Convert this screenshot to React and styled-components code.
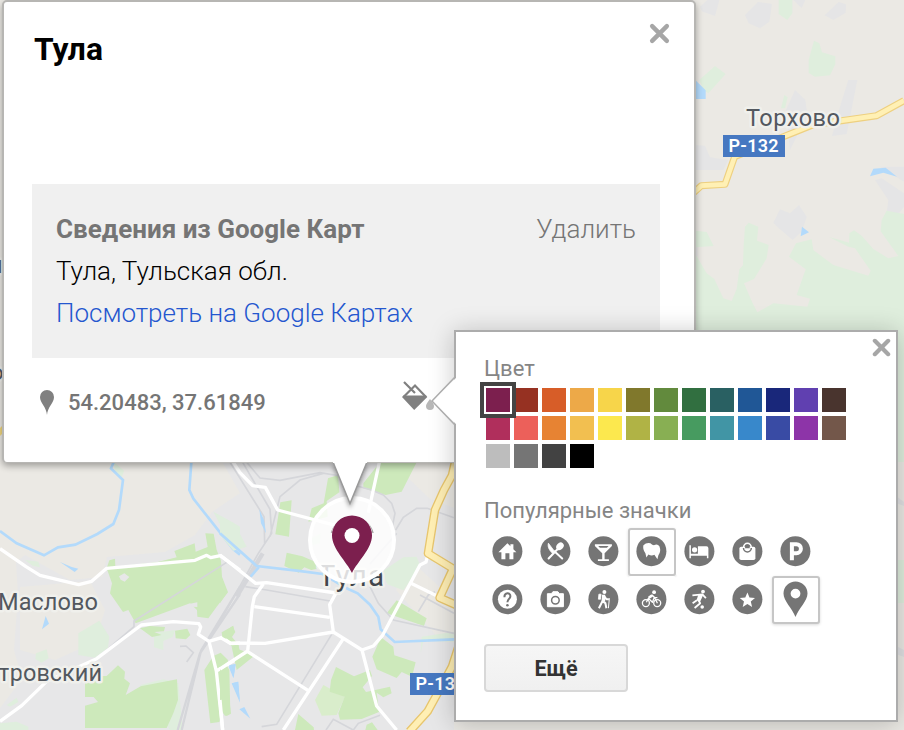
import React from "react";
import styled, { createGlobalStyle } from "styled-components";

const GlobalStyle = createGlobalStyle`
  *, *::before, *::after { box-sizing: border-box; }
  html, body { margin: 0; padding: 0; overflow: hidden; }
  body { font-family: Roboto, "Liberation Sans", sans-serif; -webkit-font-smoothing: antialiased; }
  button { font: inherit; cursor: pointer; }
`;

const Page = styled.main`
  position: relative;
  width: 904px;
  height: 730px;
  overflow: hidden;
  background: #ebe9e4;
`;

const MapCanvas = styled.svg`
  display: block;
  width: 904px;
  height: 730px;
  font-family: Roboto, sans-serif;
`;

const InfoWindow = styled.section`
  position: absolute;
  left: 2px;
  top: 0;
  width: 694px;
  height: 463px;
  padding: 26px 34px 0 28px;
  display: flex;
  flex-direction: column;
  background: #fff;
  border: 2px solid #b7b6b3;
  border-bottom-width: 1px;
  border-radius: 5px;
  box-shadow: 0 3px 7px rgba(0, 0, 0, 0.32);
`;

const Header = styled.header`
  display: flex;
  justify-content: space-between;
  height: 156px;
`;

const Title = styled.h1`
  margin: 0 0 0 2px;
  font-size: 31.8px;
  font-weight: 700;
  line-height: 43px;
  color: #000;
`;

const CloseButton = styled.button`
  display: flex;
  align-items: center;
  justify-content: center;
  width: ${(p) => p.$size}px;
  height: ${(p) => p.$size}px;
  margin: ${(p) => p.$margin || 0};
  padding: 0;
  border: 0;
  background: none;
  color: #a6a6a6;
`;

const Details = styled.div`
  height: 174px;
  padding: 24px;
  background: #f0f0f0;
`;

const DetailsRow = styled.div`
  display: flex;
  justify-content: space-between;
  height: 42px;
  font-size: 26px;
  font-weight: 300;
  line-height: 42px;
  white-space: nowrap;
  color: ${(p) => p.$color || "#000"};
`;

const Strong = styled.span`
  font-weight: 700;
  font-size: 26px;
`;

const Link = styled.a`
  color: inherit;
`;

const Footer = styled.div`
  display: flex;
  align-items: center;
  height: 88px;
  padding-left: 8px;
  color: #808080;
`;

const Coordinates = styled.span`
  margin-left: 14px;
  font-size: 22px;
  font-weight: 500;
  color: #757575;
`;

const Paint = styled.svg`
  width: 36px;
  height: 32px;
  margin: 0 223px 12px auto;
`;

const Tail = styled.svg`
  position: absolute;
  left: 322px;
  top: 460px;
  width: 60px;
  height: 54px;
  overflow: visible;
`;

const Picker = styled.section`
  position: absolute;
  left: 454px;
  top: 330px;
  width: 444px;
  height: 392px;
  padding: 24px 28px;
  display: flex;
  flex-direction: column;
  background: #fff;
  border: 2px solid #acacac;
  box-shadow: 0 2px 24px rgba(0, 0, 0, 0.22);
`;

const PickerClose = styled.div`
  position: absolute;
  right: 4px;
  top: 4px;
`;

const PickerArrow = styled.svg`
  position: absolute;
  left: -26px;
  top: 44px;
  width: 27px;
  height: 50px;
`;

const Label = styled.h2`
  margin: 0;
  height: 26px;
  font-size: 22px;
  font-weight: 400;
  line-height: 26px;
  color: #858585;
`;

const Swatches = styled.div`
  display: grid;
  grid-template-columns: repeat(13, 24px);
  grid-auto-rows: 24px;
  gap: 4px;
  margin: 6px 0 30px 2px;
`;

const Swatch = styled.button`
  padding: 0;
  border: 0;
  background: ${(p) => p.$color};
  z-index: ${(p) => (p.$selected ? 1 : 0)};
  box-shadow: ${(p) => (p.$selected ? "0 0 0 2px #fff, 0 0 0 6px #444" : "none")};
`;

const IconGrid = styled.div`
  display: grid;
  grid-template-columns: repeat(7, 48px);
  grid-auto-rows: 48px;
  margin-top: 4px;
`;

const IconCell = styled.button`
  display: flex;
  padding: 0;
  border: 2px solid ${(p) => (p.$selected ? "#c6c6c6" : "transparent")};
  border-radius: 3px;
  background: #fff;
  box-shadow: ${(p) => (p.$selected ? "0 1px 3px rgba(0,0,0,0.15)" : "none")};
`;

const Glyph = styled.svg`
  width: 44px;
  height: 44px;
  flex: none;
`;

const MoreButton = styled.button`
  width: 144px;
  height: 48px;
  margin-top: 20px;
  padding: 0;
  border: 2px solid #d8d8d8;
  border-radius: 4px;
  background: linear-gradient(#f6f6f6, #f0f0f0);
  font-size: 21.6px;
  font-weight: 700;
  color: #333;
`;

function Cross({ size, stroke }) {
  return (
    <svg width={size} height={size} viewBox="0 0 20 20">
      <path d="M3 3 17 17M17 3 3 17" stroke="currentColor" strokeWidth={stroke} strokeLinecap="round" />
    </svg>
  );
}

function MapView() {
  return (
    <MapCanvas viewBox="0 0 904 730">
      <rect width="904" height="730" fill="#ebe9e4" />

      {/* eastern countryside */}
      <g transform="translate(680 0) scale(.33333)">
        <g fill="#e5e5e6">
          <path d="M60 20 82 0H118L105 48 65 34ZM195 45 234 6 276 12 268 65 240 85 206 70ZM434 46 476 6 498 13 497 38 460 60ZM340 0H376L365 24ZM505 240H532L500 402 456 408 480 320ZM345 270 376 300 382 345 330 450 318 330ZM42 435 75 437 90 472 145 480 130 510H42ZM280 668 300 628 330 640 357 615 380 650 365 695 338 720 293 682ZM585 540 605 535 672 580V620L655 642 620 640 625 600ZM600 500 672 500V545ZM42 700H52V770H42Z" />
        </g>
        <g fill="#dfeedd">
          <path d="M296 0H337V40L322 60 296 42ZM386 180 402 122 418 130 426 157 466 169V193L450 226 405 230 386 219ZM58 240 105 198 137 222 85 280 70 270ZM303 325 313 285 323 292 315 325ZM48 692 80 696 101 738 48 742ZM195 680 206 668 235 680 231 722 266 735 260 775 222 837 192 850H187L191 735ZM192 850 218 910 232 937 280 910 382 920 390 896 350 885 377 808 327 770 348 730 395 718 400 750 460 795 565 827 572 812 525 745 505 740 447 711 480 720 507 728 508 700 522 691 545 707 580 747 625 775 655 768 602 694 605 660 620 632 672 642V1020H45V760L80 820 103 837 130 895 155 903 170 867 178 808 212 771 222 800Z" />
        </g>
        <path d="M42 236 77 271V297H42ZM570 529 580 506 617 503 651 530 610 518ZM366 680 387 697 362 709Z" fill="#b3dafb" />
        <g fill="none" strokeLinejoin="round">
          <path d="M30 588 64 557 135 553 164 470 310 410 400 374 590 347 672 302" stroke="#eed080" strokeWidth="21" />
          <path d="M30 588 64 557 135 553 164 470 310 410 400 374 590 347 672 302" stroke="#fff0b4" strokeWidth="14" />
        </g>
      </g>
      <path d="M896 330H904V462H896ZM896 560H904V603H896Z" fill="#dfeedd" />
      <path d="M896 496 904 502V506L896 503ZM896 646 904 650V657L896 654Z" fill="#e0e0e2" />

      {/* city area */}
      <path d="M210 440H454V730H0V708L22 679 14 650 18 594 16 562 25 555 70 580 102 577 107 557 165 552 195 535 212 512 240 493Z" fill="#e7e7e8" />
      <path d="M20 587 90 581 105 610 95 642 55 660 20 650ZM380 455H454V508L430 499 405 475ZM396 590 440 640 454 632V600L410 560Z" fill="#ebe9e4" />
      <g transform="translate(0 440) scale(.33333)">
        <g fill="#dfeedd">
          <path d="M640 215 695 245 720 260V330L680 290ZM342 67 372 92 366 110 345 101ZM235 580 298 542 328 590 324 623 285 653 235 645ZM108 640 140 628 146 655 125 668 106 657ZM462 580 525 570 519 590 490 603V630L462 622ZM75 360 115 365 120 382 98 377ZM20 795 50 773 55 786 30 800ZM0 850 50 845 85 860V870H0ZM420 735 490 718 535 730 548 870H510Z" />
        </g>
        <g fill="#cde9bb">
          <path d="M320 385 328 361 345 356 346 380 470 367 530 352 523 333 584 310 587 335 623 321 616 280 641 281 650 330 663 362 666 410 684 457 650 500 625 535 592 530 591 510 570 490 407 550 385 510 369 516 330 460 336 430ZM420 565 450 558 495 561 492 574 463 576 485 585 456 591ZM525 572 562 566 571 585 558 598 527 595ZM668 580 698 558 706 576 696 591 716 615 720 640 672 600ZM613 690 640 648 662 638 684 660 679 695 693 821 680 828 665 815 658 846 631 850Z" />
          <path d="M255 708 320 708 354 676 375 695 373 716 390 730 377 765 422 739 531 718 534 780 520 820 500 864H255V797L294 786 281 771H255Z" />
        </g>
        <path d="M357 409 373 400 388 411 374 425 362 419ZM570 491 592 487V501L575 500Z" fill="#e7e7e8" />
        <g fill="none" stroke="#d5d6da">
          <path d="M680 367 402 543V560L290 656M540 619 558 618 580 638 560 666" strokeWidth="5" />
          <path d="M720 462 600 640 533 870M545 870 603 632 720 440" strokeWidth="7" />
        </g>
        <g fill="none" stroke="#b3dafb">
          <path d="M0 273 50 310 132 346 174 322 226 314 292 282 340 252 357 210 369 120 333 85 341 67M574 67 568 150 580 176 700 328 720 344" strokeWidth="8" />
        </g>
        <path d="M180 366 215 381 235 386 224 396ZM137 528 147 551 126 568ZM687 675 707 672 701 714ZM695 730 715 725 720 788Z" fill="#b3dafb" />
        <g fill="none" stroke="#fff" strokeWidth="10" strokeLinejoin="round">
          <path d="M0 326 78 380 120 406 236 434 275 424 320 385 585 361 620 346 632 353 661 347 720 390M0 844 65 797 140 724 290 656 424 555 520 545 597 551 602 561 595 583 627 604 667 592 692 611 720 609M627 604 649 693 668 870M649 693 720 651" />
        </g>
      </g>
      <g transform="translate(220 440) scale(.33333)">
        <g fill="#dfeedd">
          <path d="M0 235 45 253 80 320 40 332 0 285ZM485 395 550 352 590 350 602 380 550 451 502 433ZM605 590 702 575V605L610 602 602 640ZM264 300 302 280 300 310 270 318Z" />
          <path d="M285 780 310 735 375 770 350 825 305 827Z" fill="#d9edcb" />
        </g>
        <g fill="#cde9bb">
          <path d="M181 187 215 181 207 290 166 283ZM324 115 354 105 358 157 320 183 323 230 265 245 275 205 311 190ZM430 130 480 67H590L545 155 497 165 430 145ZM200 338 247 349 320 380 274 390 253 382 236 398 193 378ZM530 481 620 535 612 558 500 520ZM457 650 483 592 520 620 523 646 587 667 576 710 545 696 530 714 470 688ZM333 720 348 681 402 709 450 690 456 708 428 742 438 756 510 740 515 760 490 772 470 758 477 816 425 837 360 839 355 820 374 770 329 755ZM235 822 281 862 282 870H225ZM440 854 456 847 473 870H436ZM629 359 702 372V394ZM0 400 22 457 0 490ZM5 577 40 557 43 575 30 591 8 600ZM35 620 105 646 50 690ZM0 640 28 690 31 820 15 828 0 800Z" />
        </g>
        <g fill="none" stroke="#d5d6da" strokeWidth="5">
          <path d="M30 67 132 230 134 310M68 67 150 208 155 280 115 340 0 545M80 67 120 114 180 121 300 98 360 108 400 135 455 150 490 165 515 190 525 220 515 270M150 290 180 170 240 120 310 100M76 440 140 450 330 483M335 583 170 853 125 860M450 440 475 490 520 540 702 580M527 270 550 232 590 205 622 205 702 233M450 372 530 280M595 515 625 465 645 455M600 465 702 520M318 870 340 838 400 870 415 850 480 826" />
          <path d="M128 340 50 470" strokeWidth="13" />
        </g>
        <path d="M0 280 110 378 230 392 308 402 380 445 413 460 450 494 475 530 482 568 524 606 702 598M116 382 92 410" fill="none" stroke="#b3dafb" strokeWidth="8" />
        <path d="M118 208 132 240 138 280 123 250ZM26 680 47 672 40 714ZM36 730 54 725 59 780ZM58 808 73 801 91 836Z" fill="#b3dafb" />
        <g fill="none" stroke="#fff" strokeWidth="10" strokeLinejoin="round">
          <path d="M40 67 60 98 98 137 136 142 173 210 360 260M478 67 445 218M0 345 107 430 140 428 348 459 359 459 370 448M130 432 103 470 97 500 83 633 0 687M103 500 329 532M0 592 30 609 135 610 340 576M348 459 329 494 340 576 426 630 460 618 487 587 600 375 618 366 623 347M426 630 470 798 530 870M370 596 190 870M83 635 265 752M573 430 650 467M0 780 8 870" />
        </g>
        <path d="M705 67 696 106 672 150 645 210 624 340 699 386 659 473 720 500M725 590 696 680 650 765 623 814 568 875" fill="none" stroke="#e8c66e" strokeWidth="26" strokeLinejoin="round" />
        <path d="M705 67 696 106 672 150 645 210 624 340 699 386 659 473 720 500M725 590 696 680 650 765 623 814 568 875" fill="none" stroke="#ffefb4" strokeWidth="18" strokeLinejoin="round" />
      </g>

      <g fill="#53585f" stroke="#f0f0ec" strokeWidth="5" strokeLinejoin="round" paintOrder="stroke" fontSize="23.6">
        <text x="746" y="126" textLength="94">Торхово</text>
        <text x="-2" y="609.5" textLength="100">Маслово</text>
        <text x="-1.5" y="681" textLength="103.5">тровский</text>
        <text x="318" y="586" fontSize="29" fill="#42464b" textLength="66">Тула</text>
        <text x="-15" y="273" fontSize="23">ы</text>
        <text x="-9" y="380" fontSize="22">о</text>
      </g>
      <path d="M0 436V428L4 424V432Z" fill="#efd67e" />
      <g fill="#4678c1">
        <rect x="723" y="135" width="62" height="22" />
        <rect x="410" y="673" width="62" height="22" />
      </g>
      <g fill="#fff" fontSize="18" fontWeight="600">
        <text x="728.5" y="152.3" textLength="50">Р-132</text>
        <text x="415.5" y="690.3" textLength="50">Р-132</text>
      </g>

      <circle cx="352" cy="540" r="42" fill="#fff" fillOpacity=".82" stroke="#fff" strokeWidth="4" />
      <path d="M331.5 533A21.5 21.5 0 0 1 373 533" fill="none" stroke="#9b9b9b" strokeWidth="1.5" />
      <path d="M352 573C347 562 332 549 332 535.5A20 20 0 0 1 372 535.5C372 549 357 562 352 573Z" fill="#7c1f4e" stroke="#fff" strokeWidth="1" paintOrder="stroke" />
      <circle cx="352" cy="535.5" r="7.5" fill="#fff" />
    </MapCanvas>
  );
}

const colors = [
  "#7c1f4e", "#963122", "#d75d28", "#eda948", "#f7d54a", "#80782c", "#628a3d", "#316f40", "#296062", "#205796", "#19277a", "#6040b0", "#49342e",
  "#b02f5c", "#ec605a", "#e78333", "#f2bf50", "#fce84e", "#b0b345", "#88af53", "#479b60", "#4195a5", "#3888cb", "#394ba4", "#8d34a8", "#73574a",
  "#bdbdbd", "#757575", "#424242", "#000000",
];

/* Artwork is centred on the origin; the badge is 30 units wide. */
const icons = {
  home: <path d="M-9 1 0-8 3-5V-7H6V-2L9 1H6V8H2V2H-2V8H-6V1Z" fill="#fff" />,
  restaurant: (
    <g fill="#fff" stroke="#fff">
      <path d="M-7-8-1 0-3 2C-6-1-8-4-7-8Z" strokeWidth=".8" />
      <ellipse cx="4.6" cy="-4.9" rx="3.3" ry="4.2" transform="rotate(42 4.6 -4.9)" stroke="none" />
      <path d="M-6.8 7.3 3-3M-1 0 6.8 7.3" strokeWidth="2" strokeLinecap="round" fill="none" />
    </g>
  ),
  bar: <path fillRule="evenodd" d="M-8.5-7H8.5V-5.2L1.2 2V8H5.5V9.8H-5.5V8H-1.2V2L-8.5-5.2ZM-5.2-5.2-3.5-3.5H3.5L5.2-5.2Z" fill="#fff" />,
  theatre: (
    <path
      d="M-8-6Q-5-9-1-8 1-6 2.5-6 6-8 8-5 10 0 7 4L6 8 3 3.5Q0 5-3 3.2L-5 6.4-6 2Q-9-2-8-6Z"
      fill="#fff"
    />
  ),
  hotel: (
    <g fill="#fff">
      <path d="M-10-6H-8.5V2.5H-1.5V-5H7Q9-5 9-3V7H7.5V4.5H-8.5V7H-10Z" />
      <circle cx="-4.8" cy="-1.4" r="2.6" />
    </g>
  ),
  shopping: (
    <g>
      <rect x="-8" y="-4.5" width="16" height="13.3" rx="1.8" fill="#fff" />
      <path d="M-3.8-4A3.8 3.8 0 0 1 3.8-4" fill="none" stroke="#fff" strokeWidth="1.6" />
      <path d="M-2.3-4.6A2.3 2.3 0 0 1 2.3-4.6V-3H-2.3Z" fill="#757575" />
      <path d="M-3.9-3.2A3.9 3.9 0 0 0 3.9-3.2" fill="none" stroke="#757575" strokeWidth="1.5" />
    </g>
  ),
  parking: <path d="M-3.5 9V-7H1A4.3 4.3 0 0 1 1 2H-3" fill="none" stroke="#fff" strokeWidth="4" />,
  help: (
    <g>
      <circle r="9.5" fill="#fff" />
      <path d="M-3-2C-3-7 3-7 3-3 3-.5 0 0 0 3" stroke="#757575" strokeWidth="2" fill="none" />
      <circle cy="6" r="1.3" fill="#757575" />
    </g>
  ),
  camera: (
    <g>
      <path d="M-8-5.5H-4L-2.5-7.5H2.5L4-5.5H8V7.5H-8Z" fill="#fff" stroke="#fff" strokeLinejoin="round" />
      <circle cy="1" r="3.8" fill="none" stroke="#757575" strokeWidth="1.5" />
    </g>
  ),
  hiking: (
    <g stroke="#fff" fill="none" strokeWidth="2" strokeLinejoin="round">
      <circle cx="1" cy="-7.3" r="2" fill="#fff" stroke="none" />
      <path d="M0-4-1 2 2 4 3 9M-1 2-2.5 5-4.5 9M1-3 3 0H5.5" />
      <path d="M-4.5-5-5 0H-2.8L-2.3-5Z" fill="#fff" strokeWidth=".8" />
      <path d="M6-1 5 9" strokeWidth="1" />
      <path d="M.2-4.5V2.5" strokeWidth="3.2" />
    </g>
  ),
  bike: (
    <g stroke="#fff" fill="none" strokeWidth="1.3" strokeLinejoin="round">
      <circle cx="-5.5" cy="3.9" r="3.5" />
      <circle cx="5.8" cy="3.9" r="3.5" />
      <path d="M-5 3-3-1 1 3 3-2 6 4M-3-1 1-4 3-1.5H6" />
      <path d="m-2.6-1.4 3.4-2.4" strokeWidth="2.6" />
      <circle cx="2.7" cy="-7" r="1.9" fill="#fff" stroke="none" />
    </g>
  ),
  football: (
    <g fill="none" stroke="#fff" strokeWidth="1.8" strokeLinejoin="round">
      <circle cx="3.6" cy="-7.6" r="1.9" fill="#fff" stroke="none" />
      <circle cx="2.8" cy="7.8" r="1.8" fill="#fff" stroke="none" />
      <path d="M-7-3.8 3-4.8 6.5-1M-2.5 1-6.8 4M-1 1 .8 4-4.8 8.8" />
      <path d="M-1-4.8H4L.8 2.2-3 1.2Z" fill="#fff" stroke="none" />
    </g>
  ),
  star: <path d="m0-7.5 2.1 5.1 5.5.4-4.2 3.6 1.3 5.4L0 4.1-4.7 7l1.3-5.4L-7.6-2l5.5-.4Z" fill="#fff" transform="translate(0 .8)" />,
};

const iconNames = [
  "home", "restaurant", "bar", "theatre", "hotel", "shopping", "parking",
  "help", "camera", "hiking", "bike", "football", "star", "pin",
];

function PoiIcon({ name }) {
  if (name === "pin") {
    return (
      <Glyph viewBox="0 0 44 44">
        <path fillRule="evenodd" d="M21.5 39C18 30 9.5 23 9.5 15.5A12 12 0 0 1 33.5 15.5C33.5 23 25 30 21.5 39ZM21.5 10.7A4.9 4.9 0 1 0 21.5 20.5A4.9 4.9 0 1 0 21.5 10.7Z" fill="#757575" />
      </Glyph>
    );
  }
  return (
    <Glyph viewBox="0 0 44 44">
      <g transform="translate(21.4 21.2)">
        <circle r="15" fill="#757575" />
        {icons[name]}
      </g>
    </Glyph>
  );
}

export default function App() {
  return (
    <>
      <GlobalStyle />
      <Page>
        <MapView />
        <InfoWindow>
          <Header>
            <Title>Тула</Title>
            <CloseButton $size={30} $margin="-10px -14px 0 0" aria-label="Закрыть">
              <Cross size={21} stroke={4.2} />
            </CloseButton>
          </Header>
          <Details>
            <DetailsRow $color="#757575">
              <Strong>Сведения из Google Карт</Strong>
              <Link>Удалить</Link>
            </DetailsRow>
            <DetailsRow>Тула, Тульская обл.</DetailsRow>
            <DetailsRow $color="#2457cf">
              <Link>Посмотреть на Google Картах</Link>
            </DetailsRow>
          </Details>
          <Footer>
            <svg width="14" height="25" viewBox="0 0 14 25">
              <path d="M7 25C6.5 17 0 13 0 7A7 7 0 0 1 14 7C14 13 7.5 17 7 25Z" fill="currentColor" />
            </svg>
            <Coordinates>54.20483, 37.61849</Coordinates>
            <Paint viewBox="0 0 36 32">
              <path d="M3 2 14 13M2.5 17 14 5.5 25 17" fill="none" stroke="#808080" strokeWidth="2.2" />
              <path d="M1 17 2.5 15.5H25L26.3 17 13.2 30Z" fill="#808080" />
              <path d="M29 19Q25 24 25 26A4 4 0 0 0 33 26Q33 24 29 19Z" fill="#b8b8b8" />
            </Paint>
          </Footer>
        </InfoWindow>
        <Tail viewBox="0 0 60 54">
          <path d="M11 2 28 43.5 45 2" fill="#fff" stroke="#999" strokeWidth="1.5" filter="drop-shadow(0 3px 2px rgba(0,0,0,.35))" />
          <path d="M10 0H46L45 3H11Z" fill="#fff" />
        </Tail>
        <Picker>
          <PickerArrow viewBox="0 0 27 50">
            <path d="M27 1 2 25 27 49Z" fill="#fff" />
            <path d="M25 1 2 25 25 49" fill="none" stroke="#acacac" strokeWidth="1.5" />
          </PickerArrow>
          <PickerClose>
            <CloseButton $size={22} aria-label="Закрыть">
              <Cross size={19} stroke={4.4} />
            </CloseButton>
          </PickerClose>
          <Label>Цвет</Label>
          <Swatches>
            {colors.map((c, i) => (
              <Swatch key={c} $color={c} $selected={i === 0} aria-label={c} />
            ))}
          </Swatches>
          <Label>Популярные значки</Label>
          <IconGrid>
            {iconNames.map((name) => (
              <IconCell key={name} $selected={name === "theatre" || name === "pin"} aria-label={name}>
                <PoiIcon name={name} />
              </IconCell>
            ))}
          </IconGrid>
          <MoreButton>Ещё</MoreButton>
        </Picker>
      </Page>
    </>
  );
}
